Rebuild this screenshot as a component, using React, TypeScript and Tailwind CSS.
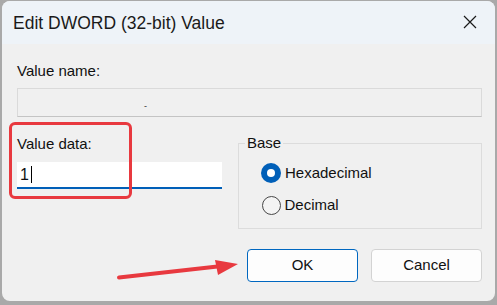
import React from "react"

const font = { fontFamily: '"Liberation Sans", Arial, sans-serif' }

function Radio({ checked, label }: { checked?: boolean; label: string }) {
  return (
    <label className="flex h-[20px] items-center">
      {checked ? (
        <span className="flex h-[20px] w-[20px] items-center justify-center rounded-full bg-[#005fb8]">
          <span className="h-[8px] w-[8px] rounded-full bg-white" />
        </span>
      ) : (
        <span className="ml-[0.5px] h-[19px] w-[19px] rounded-full border border-[#484848] bg-[#f4f4f4]" />
      )}
      <span className="ml-[4px] text-[15px] leading-[18px] text-[#111]">{label}</span>
    </label>
  )
}

export default function App() {
  return (
    <div className="relative h-[305px] w-[497px] overflow-hidden bg-[#a9a9a9] pl-[2px] pt-[1px]" style={font}>
      <div className="flex h-[300px] w-[493px] flex-col overflow-hidden rounded-[8px] bg-[#f0f0f0]">
        <div className="flex h-[43px] items-center justify-between bg-[#eef3f8] pl-[11px] pr-[18px]">
          <span className="text-[17.5px] leading-[20px] text-[#1a1a1a]">Edit DWORD (32-bit) Value</span>
          <svg width="14" height="14" viewBox="0 0 14 14" className="mt-[-1px]">
            <path d="M1 1L13 13M13 1L1 13" stroke="#1a1a1a" strokeWidth="1.2" fill="none" />
          </svg>
        </div>

        <div className="flex flex-col pl-[15px] pr-[13px] pt-[18px]">
          <div className="text-[15px] leading-[18px] text-[#111]">Value name:</div>
          <div className="mt-[8px] flex h-[29px] items-end border border-[#dadada] border-b-[#c4c4c4] bg-[#f0f0f0] pb-[5px] pl-[126px]">
            <span className="text-[9px] leading-[9px] text-[#333]">-</span>
          </div>

          <div className="mt-[17px] flex items-start">
            <div className="flex w-[205px] flex-col pt-[1px]">
              <div className="text-[15px] leading-[18px] text-[#111]">Value data:</div>
              <div className="mt-[9px] flex h-[27px] items-center border-b-2 border-[#005fb8] bg-white pl-[3px]">
                <span className="text-[16px] leading-[18px] text-[#111]">1</span>
                <span className="ml-[2px] h-[17px] w-[1px] bg-black" />
              </div>
            </div>

            <fieldset className="ml-[16px] flex-1 border border-[#dcdcdc] pb-[13px] pl-[22px]">
              <legend className="ml-[-16px] px-[2px] text-[15px] leading-[18px] text-[#111]">Base</legend>
              <div className="mt-[11px] flex flex-col gap-[12px]">
                <Radio checked label="Hexadecimal" />
                <Radio label="Decimal" />
              </div>
            </fieldset>
          </div>

          <div className="mt-[20px] flex justify-end gap-[13px]">
            <button className="h-[33px] w-[111px] rounded-[4px] border border-[#0067c0] bg-[#fdfdfd] text-[15px] text-[#111]">
              OK
            </button>
            <button className="h-[33px] w-[111px] rounded-[4px] border border-[#d3d3d3] bg-[#fdfdfd] text-[15px] text-[#111]">
              Cancel
            </button>
          </div>
        </div>
      </div>

      {/* annotation: red highlight box + arrow */}
      <div className="absolute left-[9px] top-[122px] h-[77px] w-[123px] rounded-[6px] border-[3px] border-[#e8393f]" />
      <svg className="absolute left-0 top-0" width="497" height="305" viewBox="0 0 497 305">
        <path d="M119 277.5L222 266" stroke="#e8393f" strokeWidth="4" strokeLinecap="round" fill="none" />
        <polygon points="238,264 215,260 218,275" fill="#e8393f" />
      </svg>
    </div>
  )
}
